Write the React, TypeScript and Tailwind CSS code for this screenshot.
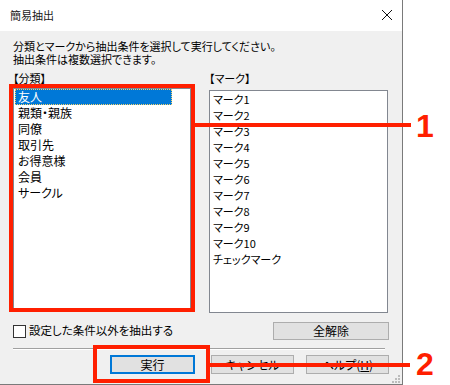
import React from "react";

const jp = "font-['Noto_Sans_CJK_JP','Noto_Sans',sans-serif] [font-feature-settings:'palt']";

const groups = ["友人", "親類・親族", "同僚", "取引先", "お得意様", "会員", "サークル"];
const marks = [
  "マーク1",
  "マーク2",
  "マーク3",
  "マーク4",
  "マーク5",
  "マーク6",
  "マーク7",
  "マーク8",
  "マーク9",
  "マーク10",
  "チェックマーク",
];

const Button = ({ label, w, focused }: { label: React.ReactNode; w: string; focused?: boolean }) => (
  <div
    className={`${w} h-[19px] flex items-center justify-center bg-[#e1e1e1] text-[12px] leading-none text-black ${
      focused ? "border-2 border-[#0078d7]" : "border border-[#adadad]"
    }`}
  >
    {label}
  </div>
);

const App = () => {
  return (
    <div className={`relative w-[450px] h-[385px] bg-white overflow-hidden ${jp}`}>
      {/* Dialog */}
      <div className="w-[403px] h-[385px] flex flex-col border-r border-b border-[#7a7a7a]">
        {/* Title bar */}
        <div className="h-[31px] bg-white flex items-center justify-between pl-[10px] pr-[9px] shrink-0">
          <span className="text-[11px] leading-none text-[#1a1a1a]">簡易抽出</span>
          <svg width="12" height="12" viewBox="0 0 12 12" className="mt-[-1px]">
            <path d="M1 1 L11 11 M11 1 L1 11" stroke="#111" strokeWidth="1" />
          </svg>
        </div>

        {/* Body */}
        <div className="flex-1 bg-[#f0f0f0] px-[13px] flex flex-col">
          <div className="pt-[10px] text-[11px] leading-[13px] text-black font-['Liberation_Sans','Noto_Sans_CJK_JP',sans-serif]">
            <p>分類とマークから抽出条件を選択して実行してください。</p>
            <p>抽出条件は複数選択できます。</p>
          </div>

          <div className="flex gap-[18px] mt-[5px]">
            {/* Left column */}
            <div className="w-[178px] flex flex-col">
              <div className="text-[11px] leading-[12px] text-black">【分類】</div>
              <div className="mt-[4px] h-[223px] bg-white border border-[#828790] pl-[1px]">
                {groups.map((g, i) => (
                  <div
                    key={g}
                    className={`h-[16px] w-[157px] pl-[3px] text-[12px] leading-[16px] ${
                      i === 0 ? "bg-[#0078d7] text-white outline-1 outline-dotted outline-[#f5d36b] -outline-offset-1" : "text-black"
                    }`}
                  >
                    {g}
                  </div>
                ))}
              </div>
            </div>

            {/* Right column */}
            <div className="w-[179px] flex flex-col">
              <div className="text-[11px] leading-[12px] text-black">【マーク】</div>
              <div className="mt-[6px] h-[223px] bg-white border border-[#828790] pl-[3px]">
                {marks.map((m) => (
                  <div key={m} className="h-[16px] text-[11px] leading-[16px] text-black">
                    {m}
                  </div>
                ))}
              </div>
            </div>
          </div>

          {/* Option row */}
          <div className="flex items-center justify-between mt-[9px] h-[18px]">
            <div className="flex items-center gap-[3px]">
              <div className="w-[13px] h-[13px] bg-white border border-[#333]" />
              <span className="text-[11.5px] leading-none text-black">設定した条件以外を抽出する</span>
            </div>
            <div className="w-[116px] h-[18px] flex items-center justify-center bg-[#e1e1e1] border border-[#adadad] text-[12px] leading-none text-black">
              全解除
            </div>
          </div>

          {/* Separator */}
          <div className="mt-[8px] w-[372px] h-[1px] bg-[#a0a0a0]" />
          <div className="w-[372px] h-[1px] bg-white" />

          {/* Buttons */}
          <div className="mt-[5px] flex justify-end">
            <Button label="実行" w="w-[85px]" focused />
            <div className="ml-[16px]">
              <Button label="キャンセル" w="w-[83px]" />
            </div>
            <div className="ml-[12px]">
              <Button
                label={
                  <span>
                    ヘルプ(<span className="underline">H</span>)
                  </span>
                }
                w="w-[83px]"
              />
            </div>
          </div>

          {/* Size grip */}
          <div className="flex-1 flex items-end justify-end pb-[1px] mr-[-11px]">
            <svg width="8" height="8" viewBox="0 0 8 8">
              <rect x="6" y="0" width="2" height="2" fill="#bcbcbc" />
              <rect x="3" y="3" width="2" height="2" fill="#bcbcbc" />
              <rect x="6" y="3" width="2" height="2" fill="#bcbcbc" />
              <rect x="0" y="6" width="2" height="2" fill="#bcbcbc" />
              <rect x="3" y="6" width="2" height="2" fill="#bcbcbc" />
              <rect x="6" y="6" width="2" height="2" fill="#bcbcbc" />
            </svg>
          </div>
        </div>
      </div>

      {/* Annotations */}
      <div className="absolute left-[9px] top-[84px] w-[186px] h-[228px] border-4 border-[#ff1f00]" />
      <div className="absolute left-[195px] top-[123px] w-[216px] h-[4px] bg-[#ff1f00]" />
      <div className="absolute left-[416px] top-[110px] text-[32px] leading-[32px] font-bold text-[#ff1f00] font-['Liberation_Sans',Arial,sans-serif]">
        1
      </div>

      <div className="absolute left-[93px] top-[345px] w-[117px] h-[38px] border-4 border-[#ff1f00]" />
      <div className="absolute left-[210px] top-[363px] w-[200px] h-[4px] bg-[#ff1f00]" />
      <div className="absolute left-[416px] top-[348px] text-[32px] leading-[32px] font-bold text-[#ff1f00] font-['Liberation_Sans',Arial,sans-serif]">
        2
      </div>
    </div>
  );
};

export default App;
